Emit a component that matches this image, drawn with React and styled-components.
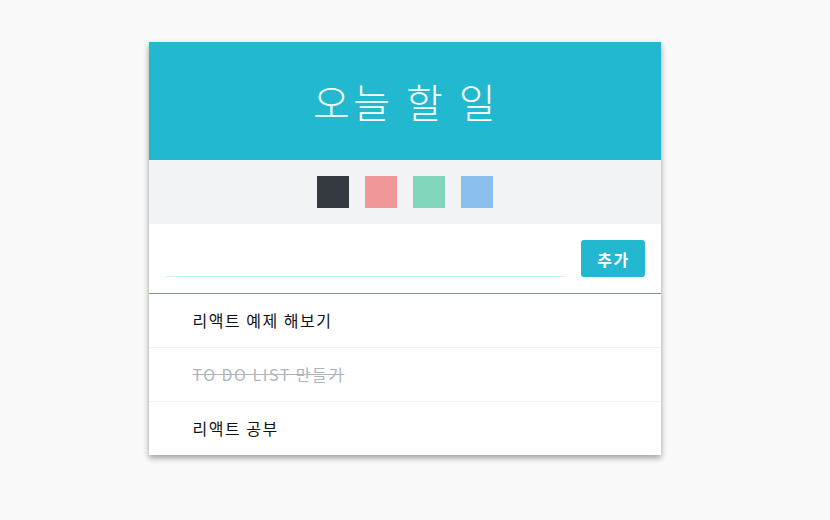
import React, { useState } from "react";
import styled, { createGlobalStyle } from "styled-components";

const GlobalStyle = createGlobalStyle`
  body {
    margin: 0;
    background: #f9f9f9;
    font-family: "Noto Sans CJK KR", "Noto Sans", sans-serif;
  }
`;

const Page = styled.div`
  display: flex;
  justify-content: center;
  padding-top: 42px;
  padding-right: 21px;
  padding-bottom: 20px;
`;

const Card = styled.main`
  width: 512px;
  background: white;
  box-shadow: 0 3px 6px rgba(0, 0, 0, 0.16), 0 3px 6px rgba(0, 0, 0, 0.23);
`;

const Title = styled.div`
  height: 118px;
  background: #22b8cf;
  color: white;
  display: flex;
  align-items: center;
  justify-content: center;
  font-size: 40px;
  font-weight: 300;
  letter-spacing: 3.5px;
  padding-left: 3px;
`;

const Palette = styled.div`
  height: 64px;
  background: #f1f3f5;
  display: flex;
  align-items: center;
  justify-content: center;
  gap: 16px;
`;

const Swatch = styled.div`
  width: 32px;
  height: 32px;
  background: ${(p) => p.color};
  opacity: ${(p) => (p.active ? 1 : 0.5)};
  cursor: pointer;
`;

const Form = styled.div`
  display: flex;
  align-items: center;
  padding: 16px;
  height: 37px;
  border-bottom: 1px solid #22b8cf;
`;

const Input = styled.input`
  flex: 1;
  margin-right: 16px;
  height: 36px;
  border: none;
  outline: none;
  border-bottom: 1px solid #c5f6fa;
  font-size: 18px;
  font-family: inherit;
  padding: 0;
  caret-color: #222;
`;

const Button = styled.button`
  width: 64px;
  height: 37px;
  border: none;
  border-radius: 3px;
  background: #22b8cf;
  color: white;
  font-family: inherit;
  font-weight: 700;
  font-size: 16px;
  letter-spacing: 1.5px;
  padding: 0 0 0 2px;
`;

const Item = styled.div`
  height: 51px;
  padding-bottom: 2px;
  display: flex;
  align-items: center;
  padding-left: 44px;
  font-size: 16px;
  letter-spacing: 1.5px;
  color: ${(p) => (p.done ? "#adb5bd" : "#111")};
  text-decoration: ${(p) => (p.done ? "line-through" : "none")};
  & + & {
    border-top: 1px solid #f1f3f5;
  }
`;

const colors = ["#343a40", "#f03e3e", "#12b886", "#228ae6"];

const todos = [
  { id: 1, text: "리액트 예제 해보기", done: false },
  { id: 2, text: "TO DO LIST 만들기", done: true },
  { id: 3, text: "리액트 공부", done: false },
];

export default function App() {
  const [color, setColor] = useState(colors[0]);
  return (
    <>
      <GlobalStyle />
      <Page>
        <Card>
          <Title>오늘 할 일</Title>
          <Palette>
            {colors.map((c) => (
              <Swatch key={c} color={c} active={c === color} onClick={() => setColor(c)} />
            ))}
          </Palette>
          <Form>
            <Input autoFocus />
            <Button>추가</Button>
          </Form>
          {todos.map((t) => (
            <Item key={t.id} done={t.done}>
              {t.text}
            </Item>
          ))}
        </Card>
      </Page>
    </>
  );
}
